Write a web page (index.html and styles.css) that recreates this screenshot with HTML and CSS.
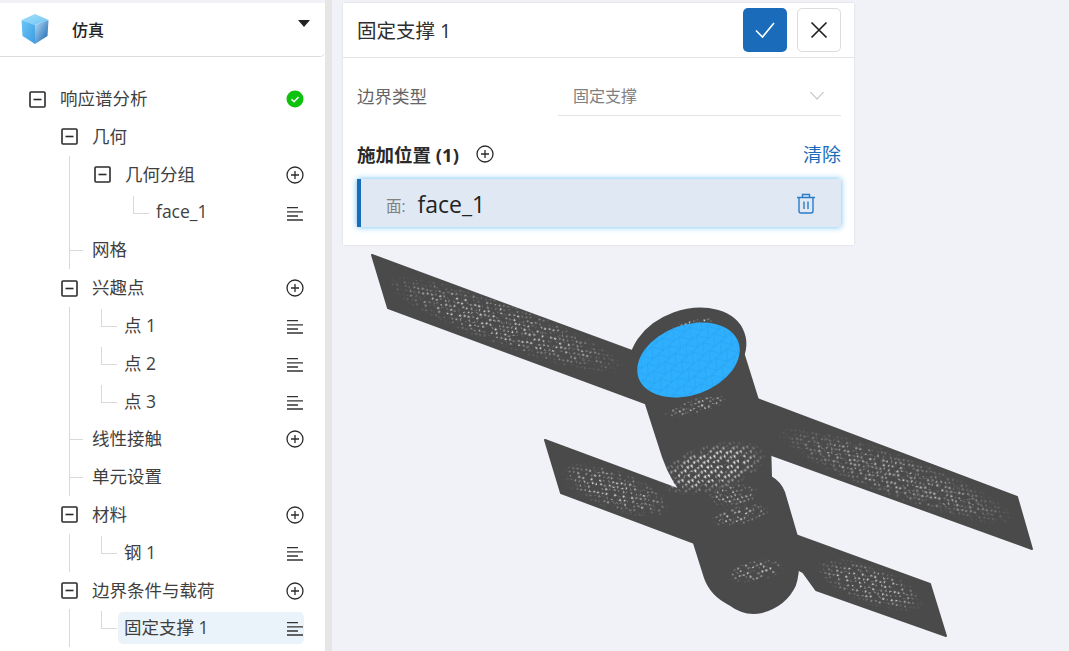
FILE: index.html
```html
<!DOCTYPE html>
<html lang="zh-CN">
  <head>
    <meta charset="UTF-8" />
    <title>固定支撑 1</title>
    <link rel="stylesheet" href="styles.css">
  </head>
  <body>
    <svg class="defs">
      <symbol id="plus" viewBox="0 0 18 18">
        <circle cx="9" cy="9" r="8" fill="none" stroke="#2b2b2b" stroke-width="1.3"/>
        <path d="M9 5v8M5 9h8" fill="none" stroke="#2b2b2b" stroke-width="1.3"/>
      </symbol>
      <symbol id="lines" viewBox="0 0 16 14">
        <path d="M0 .6h11M0 4.800h16M0 9h11M0 13h16" fill="none" stroke="#333" stroke-width="1.3"/>
      </symbol>
      <symbol id="minusbox" viewBox="0 0 17 17">
        <rect x="1" y="1" width="15" height="15" rx="1" fill="none" stroke="#2b2b2b" stroke-width="1.6"/>
        <path d="M4.500 8.500h8" fill="none" stroke="#2b2b2b" stroke-width="1.6"/>
      </symbol>
    </svg>

    <aside class="sidebar">
      <header class="side-head">
        <svg class="logo" viewBox="0 0 28 30">
          <defs>
            <linearGradient id="cubeTop" x1="0" y1="0" x2="1" y2="1"><stop offset="0" stop-color="#a5e0fb"/><stop offset="1" stop-color="#6cc4f4"/></linearGradient>
            <linearGradient id="cubeLeft" x1="0" y1="0" x2="1" y2="1"><stop offset="0" stop-color="#6cc6f5"/><stop offset="1" stop-color="#3d9de4"/></linearGradient>
            <linearGradient id="cubeRight" x1="0" y1="0" x2="1" y2="1"><stop offset="0" stop-color="#b6def6"/><stop offset="1" stop-color="#0f5fb0"/></linearGradient>
          </defs>
          <path d="M14 0l13.500 6L14 11 .5 6z" fill="url(#cubeTop)"/>
          <path d="M.5 6L14 11v19L1.500 22z" fill="url(#cubeLeft)"/>
          <path d="M27.500 6L14 11v19l12.500-8z" fill="url(#cubeRight)"/>
        </svg>
        <span class="side-title">仿真</span>
        <span class="caret"></span>
      </header>
      <div class="tree">
        <div class="row lv0">
          <svg class="box"><use href="#minusbox"/></svg>
          <div class="cell"><span>响应谱分析</span>
            <svg class="icon" viewBox="0 0 18 18"><circle cx="9" cy="9" r="8.500" fill="#0cc20c"/><path d="M5.500 9.200l2.500 2.500 4.500-4.700" fill="none" stroke="#fff" stroke-width="1.500"/></svg>
          </div>
        </div>
        <div class="row lv1">
          <svg class="box"><use href="#minusbox"/></svg>
          <div class="cell"><span>几何</span></div>
        </div>
        <div class="row lv2 guide">
          <svg class="box"><use href="#minusbox"/></svg>
          <div class="cell"><span>几何分组</span><svg class="icon"><use href="#plus"/></svg></div>
        </div>
        <div class="row lv3 guide elbow-deep">
          <div class="cell"><span>face_1</span><svg class="icon-lines"><use href="#lines"/></svg></div>
        </div>
        <div class="row lv1-leaf guide tick">
          <div class="cell"><span>网格</span></div>
        </div>
        <div class="row lv1">
          <svg class="box"><use href="#minusbox"/></svg>
          <div class="cell"><span>兴趣点</span><svg class="icon"><use href="#plus"/></svg></div>
        </div>
        <div class="row lv2-leaf guide elbow">
          <div class="cell"><span>点 1</span><svg class="icon-lines"><use href="#lines"/></svg></div>
        </div>
        <div class="row lv2-leaf guide elbow">
          <div class="cell"><span>点 2</span><svg class="icon-lines"><use href="#lines"/></svg></div>
        </div>
        <div class="row lv2-leaf guide elbow">
          <div class="cell"><span>点 3</span><svg class="icon-lines"><use href="#lines"/></svg></div>
        </div>
        <div class="row lv1-leaf guide tick">
          <div class="cell"><span>线性接触</span><svg class="icon"><use href="#plus"/></svg></div>
        </div>
        <div class="row lv1-leaf guide tick">
          <div class="cell"><span>单元设置</span></div>
        </div>
        <div class="row lv1">
          <svg class="box"><use href="#minusbox"/></svg>
          <div class="cell"><span>材料</span><svg class="icon"><use href="#plus"/></svg></div>
        </div>
        <div class="row lv2-leaf guide elbow">
          <div class="cell"><span>钢 1</span><svg class="icon-lines"><use href="#lines"/></svg></div>
        </div>
        <div class="row lv1">
          <svg class="box"><use href="#minusbox"/></svg>
          <div class="cell"><span>边界条件与载荷</span><svg class="icon"><use href="#plus"/></svg></div>
        </div>
        <div class="row lv2-leaf guide elbow">
          <div class="cell selected"><span>固定支撑 1</span><svg class="icon-lines"><use href="#lines"/></svg></div>
        </div>
      </div>
    </aside>
    <div class="strip"></div>

    <main class="stage">
      <svg class="model" viewBox="332 0 737 651">
        <defs>
          <pattern id="mesh" width="7" height="5" patternUnits="userSpaceOnUse" patternTransform="rotate(24)">
            <path d="M.5 .5h3L1.800 2.800zM4 2.500h2.800L5.200 4.800z" fill="#f4f5f8"/>
          </pattern>
          <pattern id="meshBig" width="8" height="6" patternUnits="userSpaceOnUse" patternTransform="rotate(-22)">
            <path d="M.5 .5h3.200L1.800 4zM4.500 1.500l3 .3L5.500 5.200z" fill="#f4f5f8"/>
          </pattern>
          <pattern id="meshBlue" width="14" height="10" patternUnits="userSpaceOnUse" patternTransform="rotate(-20)">
            <path d="M0 0L7 10L14 0M0 10H14M0 0H14" fill="none" stroke="#249fee" stroke-width=".7"/>
          </pattern>
          <radialGradient id="fadeGrad">
            <stop offset="0" stop-color="#fff"/>
            <stop offset=".6" stop-color="#ddd"/>
            <stop offset="1" stop-color="#000"/>
          </radialGradient>
          <mask id="fade" maskContentUnits="objectBoundingBox" x="0" y="0" width="1" height="1">
            <rect width="1" height="1" fill="url(#fadeGrad)"/>
          </mask>
          <filter id="speck" x="0" y="0" width="1" height="1">
            <feTurbulence type="fractalNoise" baseFrequency=".22" numOctaves="2" seed="7" result="noise"/>
            <feColorMatrix in="noise" type="matrix" values="0 0 0 0 0  0 0 0 0 0  0 0 0 0 0  6 0 0 0 -2.500" result="patchy"/>
            <feComposite in="SourceGraphic" in2="patchy" operator="in"/>
          </filter>
          <filter id="speckNeck" x="0" y="0" width="1" height="1">
            <feTurbulence type="fractalNoise" baseFrequency=".18" numOctaves="2" seed="3" result="noise"/>
            <feColorMatrix in="noise" type="matrix" values="0 0 0 0 0  0 0 0 0 0  0 0 0 0 0  7 0 0 0 -2.300" result="patchy"/>
            <feComposite in="SourceGraphic" in2="patchy" operator="in"/>
          </filter>
        </defs>

        <g fill="#4a4a4a" stroke="#4a4a4a" stroke-width="2" stroke-linejoin="round">
          <path d="M372 255L632 351L645 403L388 308z"/>
          <path d="M757 399L1017 497L1032 549L772 455z"/>
          <path d="M545 440L680 490L700 500L700 545L692 542L561 493z"/>
          <path d="M790 533L798 536L930 584L946 636L816 590L803 572L790 565z"/>
          <path d="M636 375L644 398L663 457Q672 483 690 503L693 540L705 578Q711 595 729 604Q745 616 762 612Q786 605 795 585Q800 570 798 540L784 492Q780 482 771 477L770 440L758 400L743 352z"/>
          <ellipse cx="688" cy="353" rx="59" ry="42" transform="rotate(-20 688 353)"/>
        </g>

        <g filter="url(#speck)">
          <ellipse cx="505" cy="325" rx="128" ry="22" transform="rotate(20.400 505 325)" fill="url(#mesh)" mask="url(#fade)"/>
          <ellipse cx="896" cy="476" rx="128" ry="22" transform="rotate(20.400 896 476)" fill="url(#mesh)" mask="url(#fade)"/>
          <ellipse cx="615" cy="490" rx="60" ry="20" transform="rotate(20.400 615 490)" fill="url(#mesh)" mask="url(#fade)"/>
          <ellipse cx="870" cy="585" rx="58" ry="19" transform="rotate(20.400 870 585)" fill="url(#mesh)" mask="url(#fade)"/>
          <ellipse cx="733" cy="495" rx="26" ry="12" transform="rotate(-5 733 495)" fill="url(#mesh)" mask="url(#fade)"/>
          <ellipse cx="741" cy="515" rx="32" ry="10" transform="rotate(-12 741 515)" fill="url(#mesh)" mask="url(#fade)"/>
          <ellipse cx="755" cy="571" rx="30" ry="11" transform="rotate(-10 755 571)" fill="url(#mesh)" mask="url(#fade)"/>
          <ellipse cx="696" cy="406" rx="34" ry="8" transform="rotate(-14 696 406)" fill="url(#mesh)" mask="url(#fade)"/>
          <ellipse cx="692" cy="324" rx="24" ry="4" transform="rotate(-12 692 324)" fill="url(#mesh)" mask="url(#fade)"/>
        </g>
        <g filter="url(#speckNeck)">
          <ellipse cx="712" cy="468" rx="56" ry="24" transform="rotate(-15 712 468)" fill="url(#meshBig)" mask="url(#fade)"/>
        </g>

        <ellipse cx="688.500" cy="360" rx="53" ry="35" transform="rotate(-20 688.500 360)" fill="#2fb0ff"/>
        <ellipse cx="688.500" cy="360" rx="53" ry="35" transform="rotate(-20 688.500 360)" fill="url(#meshBlue)"/>
      </svg>

      <section class="panel">
        <div class="panel-head">
          <h1 class="panel-title">固定支撑 1</h1>
          <button class="btn btn-ok">
            <svg width="22" height="18" viewBox="0 0 22 18"><path d="M2 9.500l6.500 6.500L20 2" fill="none" stroke="#fff" stroke-width="1.600"/></svg>
          </button>
          <button class="btn btn-close">
            <svg width="18" height="18" viewBox="0 0 18 18"><path d="M1.500 1.500l15 15M16.500 1.500l-15 15" fill="none" stroke="#222" stroke-width="1.700"/></svg>
          </button>
        </div>
        <div class="panel-body">
          <div class="field">
            <label class="field-label">边界类型</label>
            <div class="select">
              <span>固定支撑</span>
              <svg width="14" height="9" viewBox="0 0 14 9"><path d="M.5 1l6.500 7 6.500-7" fill="none" stroke="#bbb" stroke-width="1.100"/></svg>
            </div>
          </div>
          <div class="loc-head">
            <strong class="loc-title">施加位置 (1)</strong>
            <svg class="icon"><use href="#plus"/></svg>
            <a class="clear">清除</a>
          </div>
          <div class="loc-item">
            <span class="loc-kind">面:</span>
            <span class="loc-name">face_1</span>
            <svg class="trash" width="20" height="21" viewBox="0 0 20 21">
              <path d="M1 4.500h18M6.500 4.500V1.500h7v3M3 4.500V18a2 2 0 0 0 2 2h10a2 2 0 0 0 2-2V4.500M8 8.500v7.500M12 8.500v7.500" fill="none" stroke="#2a7cc7" stroke-width="1.400"/>
            </svg>
          </div>
        </div>
      </section>
    </main>
  </body>
</html>
```

FILE: styles.css
```css
* {
  box-sizing: border-box;
  margin: 0;
}

body {
  display: flex;
  width: 1069px;
  height: 651px;
  overflow: hidden;
  background-color: #f0f2f7;
  color: #3f3f3f;
  font-family: "Open Sans", "Noto Sans CJK SC", sans-serif;
  font-size: 17.500px;
}

.defs {
  position: absolute;
  width: 0;
  height: 0;
}

/* sidebar */
.sidebar {
  flex: 0 0 325px;
  height: 648px;
  margin-top: 3px;
  background-color: #fff;
}

.strip {
  flex: 0 0 7px;
  background-color: #e6e6e6;
}

.side-head {
  display: flex;
  align-items: center;
  height: 54px;
  padding: 0 15px 0 21px;
  border-bottom: 1px solid #dcdcdc;
  border-bottom-right-radius: 5px;
}

.logo {
  width: 28px;
  height: 30px;
  margin-top: -1px;
}

.side-title {
  margin: 0 0 2px 23px;
  color: #222;
  font-size: 16px;
  font-weight: 500;
}

.caret {
  width: 0;
  height: 0;
  margin: -13px 0 0 auto;
  border-style: solid;
  border-width: 7px 6px 0;
  border-color: #222 transparent transparent;
}

/* tree */
.tree {
  padding-top: 23.300px;
}

.row {
  position: relative;
  display: flex;
  align-items: center;
  height: 37.800px;
  padding-right: 21px;
}

.lv0 { padding-left: 29px; }
.lv1 { padding-left: 61px; }
.lv2 { padding-left: 94px; }
.lv1-leaf { padding-left: 86px; }
.lv2-leaf { padding-left: 118px; }
.lv3 { padding-left: 150px; }

.box {
  flex: 0 0 17px;
  width: 17px;
  height: 17px;
  margin-right: 8px;
}

.cell {
  flex: 1;
  display: flex;
  align-items: center;
  justify-content: space-between;
  height: 32px;
  padding-left: 6px;
  border-radius: 5px;
  white-space: nowrap;
}

.cell span {
  margin-bottom: 3px;
}

.selected {
  background-color: #eaf3f9;
}

.icon {
  flex: 0 0 18px;
  width: 18px;
  height: 18px;
}

.icon-lines {
  flex: 0 0 16px;
  width: 16px;
  height: 14px;
  margin: 2px 1px 0 0;
}

.guide::before {
  content: "";
  position: absolute;
  left: 69px;
  top: 0;
  bottom: 0;
  border-left: 1px solid #d9d9d9;
}

.tick::after,
.elbow::after,
.elbow-deep::after {
  content: "";
  position: absolute;
  top: 2px;
  height: calc(50% - 2px);
  border-bottom: 1px solid #d9d9d9;
}

.tick::after {
  left: 69px;
  width: 14px;
}

.elbow::after {
  left: 101px;
  width: 15px;
  border-left: 1px solid #d9d9d9;
}

.elbow-deep::after {
  left: 133px;
  width: 15px;
  border-left: 1px solid #d9d9d9;
}

/* canvas */
.stage {
  position: relative;
  flex: 1;
  height: 651px;
}

.model {
  position: absolute;
  left: 0;
  top: 0;
  width: 737px;
  height: 651px;
}

/* panel */
.panel {
  position: relative;
  width: 511px;
  height: 242px;
  margin: 3px 0 0 11px;
  background-color: #fff;
  box-shadow: 0 0 2px rgba(0, 0, 0, 0.12);
}

.panel-head {
  display: flex;
  align-items: center;
  gap: 10px;
  height: 55px;
  padding: 0 13px 0 14px;
  border-bottom: 1px solid #e4e4e4;
}

.panel-title {
  flex: 1;
  margin-bottom: 2px;
  color: #2e2e2e;
  font-size: 19.500px;
  font-weight: 400;
}

.btn {
  display: flex;
  align-items: center;
  justify-content: center;
  width: 44px;
  height: 44px;
  padding: 0;
  border-radius: 5px;
}

.btn-ok {
  border: 0;
  background-color: #1a6bba;
}

.btn-close {
  border: 1px solid #dcdcdc;
  background-color: #fff;
}

.panel-body {
  padding: 0 13px 0 14px;
}

.field {
  display: flex;
  align-items: flex-end;
  height: 58px;
}

.field-label {
  flex: 0 0 201px;
  color: #666;
  font-size: 17.500px;
  line-height: 40px;
}

.select {
  flex: 1;
  display: flex;
  align-items: center;
  justify-content: space-between;
  height: 40px;
  padding: 0 17px 0 15px;
  border-bottom: 1px solid #e2e2e2;
  color: #808080;
  font-size: 16px;
}

.select span {
  margin-bottom: 2px;
}

.loc-head {
  display: flex;
  align-items: center;
  gap: 17px;
  height: 38px;
  margin-top: 19px;
}

.loc-title {
  color: #2a2a2a;
  font-size: 18.500px;
  font-weight: 700;
}

.clear {
  margin-left: auto;
  color: #1a6bba;
  font-size: 19px;
}

.loc-item {
  display: flex;
  align-items: center;
  height: 48px;
  margin-top: 6px;
  padding: 0 25px;
  border-left: 4px solid #1a6bba;
  background-color: #dfe8f3;
  box-shadow: 0 0 6px #62bdf2;
}

.loc-kind {
  margin: 5px 9px 0 0;
  color: #808080;
  font-size: 15.500px;
}

.loc-name {
  flex: 1;
  padding: 2px 0 0 3px;
  color: #222;
  font-size: 23px;
}
```
